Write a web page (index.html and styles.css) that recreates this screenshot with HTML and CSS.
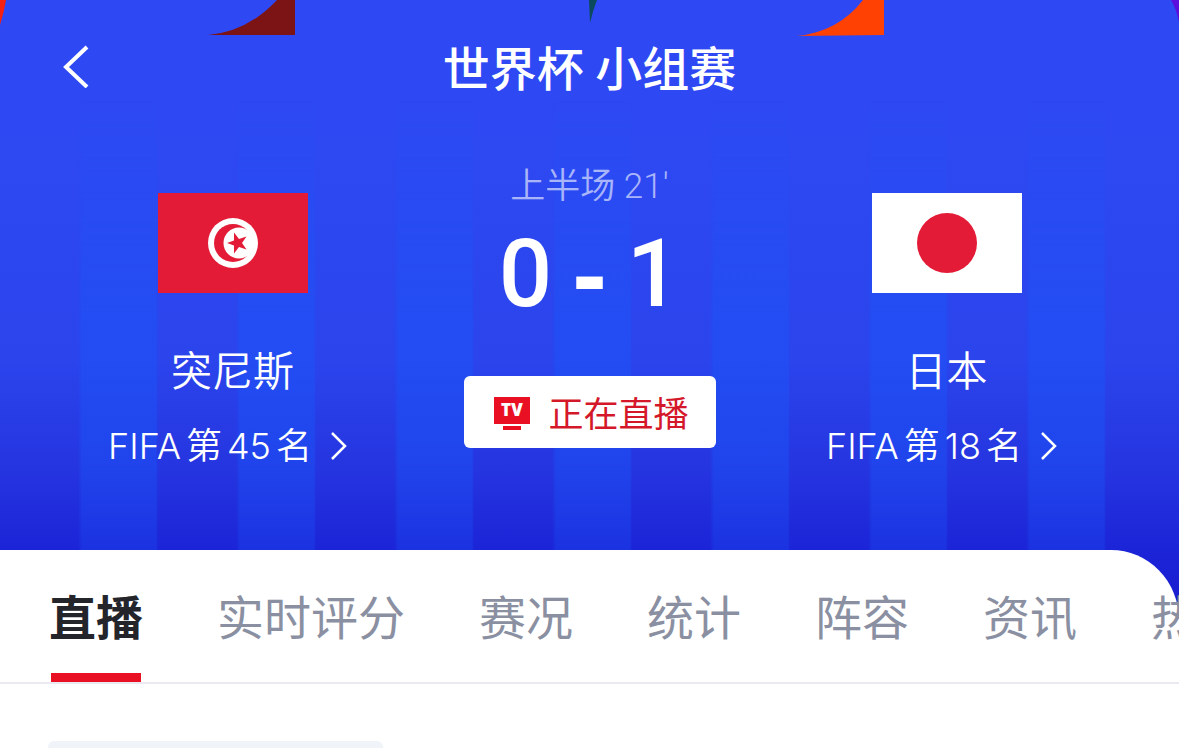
FILE: index.html
```html
<!DOCTYPE html>
<html lang="zh-CN">
<head>
    <meta charset="UTF-8">
    <meta name="viewport" content="width=device-width, initial-scale=1.0">
    <title>世界杯 小组赛</title>
    <link rel="stylesheet" href="styles.css">
</head>
<body>
    <div class="hero">
        <svg class="hero-art" viewBox="0 0 1179 40" preserveAspectRatio="none" aria-hidden="true">
            <path fill="#f5200f" d="M0 0H6Q4 12 0 25Z"/>
            <path fill="#7c1416" d="M208 35Q247 32 277 0H295V35Z"/>
            <path fill="#0b4a5c" d="M589 0H597Q593 10 590 23Z"/>
            <path fill="#ff4103" d="M797 36Q838 32 863 0H884V35Z"/>
            <path fill="#5a0fdc" d="M1171 0H1179V22Q1176 8 1171 0Z"/>
        </svg>
        <header class="topbar">
            <button class="back" aria-label="返回">
                <svg width="32" height="44" viewBox="0 0 32 44"><path d="M27 3L6 23L27 43" fill="none" stroke="#fff" stroke-width="4"/></svg>
            </button>
            <h1>世界杯 小组赛</h1>
        </header>
        <main class="match">
            <section class="team">
                <svg class="flag" viewBox="0 0 150 100" aria-hidden="true">
                    <rect width="150" height="100" fill="#e31b36"/>
                    <circle cx="75" cy="50" r="25" fill="#fff"/>
                    <circle cx="75" cy="50" r="19" fill="#e31b36"/>
                    <circle cx="81" cy="50" r="15.500" fill="#fff"/>
                    <path fill="#e31b36" d="M69 50L76 47.500V39.500L81 46L88.500 43.500L84 50L88.500 56.500L81 54L76 60.500V52.500Z"/>
                </svg>
                <h2>突尼斯</h2>
                <a class="rank" href="#">FIFA<span>第</span><span class="num">45</span>名
                    <svg width="28" height="28" viewBox="0 0 28 28"><path d="M3 1L16 14L3 27" fill="none" stroke="#fff" stroke-width="2.500"/></svg>
                </a>
            </section>
            <section class="center">
                <p class="status">上半场 21′</p>
                <div class="score"><span>0</span><span class="dash">-</span><span>1</span></div>
                <button class="live">
                    <svg width="36" height="34" viewBox="0 0 36 34" aria-hidden="true">
                        <rect width="36" height="27" fill="#e81022"/>
                        <rect x="9" y="29" width="18" height="4" fill="#e81022"/>
                        <text x="18" y="19" text-anchor="middle" class="tv">TV</text>
                    </svg>
                    <span>正在直播</span>
                </button>
            </section>
            <section class="team">
                <svg class="flag" viewBox="0 0 150 100" aria-hidden="true">
                    <rect width="150" height="100" fill="#fff"/>
                    <circle cx="75" cy="50" r="30" fill="#e31b36"/>
                </svg>
                <h2>日本</h2>
                <a class="rank" href="#">FIFA<span>第</span><span class="num">18</span>名
                    <svg width="28" height="28" viewBox="0 0 28 28"><path d="M3 1L16 14L3 27" fill="none" stroke="#fff" stroke-width="2.500"/></svg>
                </a>
            </section>
        </main>
    </div>
    <div class="panel">
        <nav class="tabs">
            <a class="active" href="#">直播</a>
            <a href="#">实时评分</a>
            <a href="#">赛况</a>
            <a href="#">统计</a>
            <a href="#">阵容</a>
            <a href="#">资讯</a>
            <a href="#">热</a>
        </nav>
        <div class="card"></div>
    </div>
</body>
</html>
```
FILE: styles.css
```css
* {
    box-sizing: border-box;
}
body {
    margin: 0;
    height: 100vh;
    overflow: hidden;
    display: flex;
    flex-direction: column;
    font-family: Roboto, "Noto Sans CJK SC", sans-serif;
    background-color: #fff;
}
h1, h2, p {
    margin: 0;
    font-weight: 400;
}
a {
    color: inherit;
    text-decoration: none;
}
button {
    border: 0;
    padding: 0;
    font-family: inherit;
    cursor: pointer;
}

/* blue header */
.hero {
    position: relative;
    flex-shrink: 0;
    padding-bottom: 150px;
    color: #fff;
    background: linear-gradient(#2e49f4 0, #2e49f2 150px, #2b44ec 360px, #2535e0 470px, #1c24d7 550px, #1a1bce 620px);
}
.hero::before {
    content: "";
    position: absolute;
    inset: 0;
    background: repeating-linear-gradient(90deg, transparent 0 78px, rgba(26, 88, 252, 0.55) 82px 156px, transparent 158px);
    -webkit-mask-image: linear-gradient(transparent 100px, rgba(0, 0, 0, 0.8) 320px, rgba(0, 0, 0, 0.8) 450px, rgba(0, 0, 0, 0.5) 550px, transparent 560px);
    mask-image: linear-gradient(transparent 100px, rgba(0, 0, 0, 0.8) 320px, rgba(0, 0, 0, 0.8) 450px, rgba(0, 0, 0, 0.5) 550px, transparent 560px);
}
.hero-art {
    position: absolute;
    top: 0;
    left: 0;
    width: 100%;
    height: 40px;
}
.topbar {
    position: relative;
    display: grid;
    grid-template-columns: 60px 1fr 60px;
    align-items: center;
    height: 137px;
    padding: 0 60px 6px;
}
.back {
    display: flex;
    background: none;
}
.topbar h1 {
    font-size: 47px;
    font-weight: 500;
    text-align: center;
}
.match {
    position: relative;
    display: grid;
    grid-template-columns: repeat(3, 1fr);
    padding: 0 54px;
}
.team, .center {
    display: flex;
    flex-direction: column;
    align-items: center;
}
.team {
    padding-top: 56px;
}
.flag {
    width: 150px;
    height: 100px;
}
.team h2 {
    margin-top: 49px;
    font-size: 41px;
    font-weight: 350;
    line-height: 60px;
}
.rank {
    display: flex;
    align-items: center;
    gap: 5px;
    margin-top: 19px;
    font-family: Inter, "Noto Sans CJK SC", sans-serif;
    font-size: 36px;
    font-weight: 350;
    line-height: 50px;
}
.rank svg {
    margin-left: 12px;
}
.center {
    padding-top: 25px;
}
.status {
    font-size: 35px;
    font-weight: 350;
    line-height: 50px;
    color: rgba(255, 255, 255, 0.6);
}
.score {
    display: flex;
    gap: 20px;
    margin-top: 10px;
    font-size: 94px;
    font-weight: 500;
    line-height: 104px;
}
.score .dash {
    font-family: "Liberation Sans", sans-serif;
    font-size: 104px;
    font-weight: 700;
}
.live {
    display: flex;
    align-items: center;
    justify-content: center;
    gap: 18px;
    width: 252px;
    height: 72px;
    margin-top: 50px;
    padding-left: 4px;
    border-radius: 6px;
    background-color: #fff;
    color: #d4182a;
    font-size: 35px;
}
.live svg {
    margin-top: 4px;
}
.live span {
    padding-bottom: 2px;
}
.tv {
    font-family: "Open Sans", sans-serif;
    font-size: 17px;
    font-weight: 800;
    fill: #fff;
}

/* white sheet with the tabs */
.panel {
    position: relative;
    flex: 1 0 auto;
    margin-top: -71px;
    border-top-right-radius: 68px 70px;
    background-color: #fff;
}
.tabs {
    display: flex;
    gap: 74px;
    padding-left: 49px;
    overflow: hidden;
    border-bottom: 2px solid #e9e9f1;
    font-size: 47px;
    line-height: 138px;
    color: #8a90a2;
    white-space: nowrap;
}
.tabs a {
    height: 132px;
}
.tabs .active {
    color: #23252b;
    font-weight: 700;
    background: linear-gradient(#e81022, #e81022) center bottom / 90px 9px no-repeat;
}
.card {
    width: 335px;
    height: 7px;
    margin: 57px 0 0 48px;
    border-radius: 6px 6px 0 0;
    background-color: #f0f4f9;
}
```
